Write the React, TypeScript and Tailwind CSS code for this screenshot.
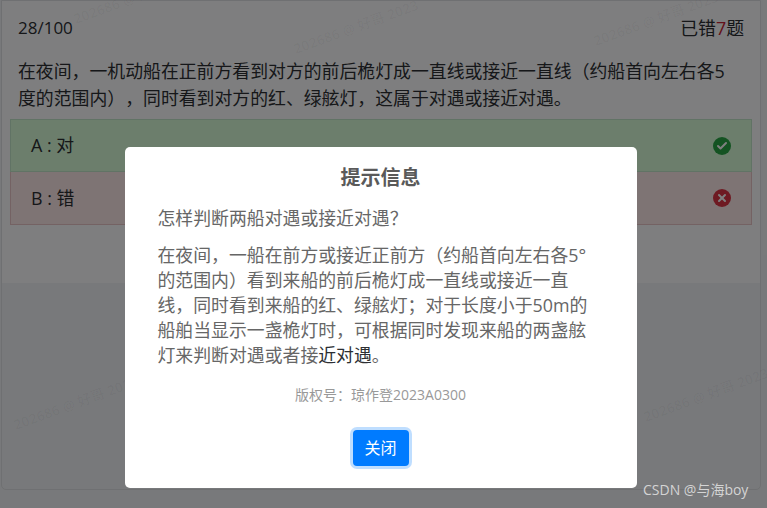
import { Check, X } from "lucide-react";

const FONT = "[font-family:'Open_Sans','Noto_Sans_CJK_SC',sans-serif] [text-spacing-trim:space-all]";

const WATERMARKS = [
  { id: 1, className: "left-[70px] top-[-14px]" },
  { id: 2, className: "left-[290px] top-[16px]" },
  { id: 3, className: "left-[590px] top-[8px]" },
  { id: 4, className: "left-[10px] top-[392px]" },
  { id: 5, className: "left-[640px] top-[384px]" },
];

const App = () => {
  return (
    <div className={`relative h-[508px] w-[767px] overflow-hidden bg-[#f1f3f6] text-[17.87px] text-[#2c2f33] ${FONT}`}>
      {/* Question card */}
      <div className="ml-[1px] flex h-[490px] w-[760px] flex-col rounded-b-[5px] border border-[#dfe1e4]">
        <div className="h-[282px] bg-[#fcfdff]">
          <div className="flex items-center justify-between px-[16px] pt-[14px] leading-[26px]">
            <span className="text-[17px]">28/100</span>
            <span>
              已错<span className="text-[#c82333]">7</span>题
            </span>
          </div>
          <p className="mt-[17px] whitespace-nowrap px-[16px] leading-[27px]">
            在夜间，一机动船在正前方看到对方的前后桅灯成一直线或接近一直线（约船首向左右各5
            <br />
            度的范围内），同时看到对方的红、绿舷灯，这属于对遇或接近对遇。
          </p>
          <div className="mx-[8px] mt-[7px] flex flex-col">
            <div className="flex h-[53px] items-center justify-between border border-[#c3e6cb] bg-[#d8fcd8] pl-[20px] pr-[20px]">
              <span>A : 对</span>
              <span className="flex h-[18px] w-[18px] items-center justify-center rounded-full bg-[#28a745]">
                <Check size={12} strokeWidth={4} color="#ffffff" />
              </span>
            </div>
            <div className="flex h-[53px] items-center justify-between border border-t-0 border-[#e8c4c6] bg-[#fce8e8] pl-[20px] pr-[20px]">
              <span>B : 错</span>
              <span className="flex h-[18px] w-[18px] items-center justify-center rounded-full bg-[#dc3545]">
                <X size={12} strokeWidth={4} color="#ffffff" />
              </span>
            </div>
          </div>
        </div>
      </div>

      {WATERMARKS.map((mark) => (
        <span
          key={mark.id}
          className={`absolute -rotate-[20deg] whitespace-nowrap text-[14px] font-bold text-black/[0.03] ${mark.className}`}
        >
          202686 @ 好哥 2023
        </span>
      ))}

      {/* Backdrop */}
      <div className="absolute inset-0 flex items-start justify-center bg-black/50 pr-[6px] pt-[147px]">
        <div className="flex h-[341px] w-[512px] flex-col items-center rounded-[5px] bg-white px-[33px] pt-[17px] text-[#666666]">
          <h2 className="text-[20px] font-bold leading-[27px] text-[#5a5a5a]">提示信息</h2>
          <p className="mt-[14px] w-full leading-[26px]">怎样判断两船对遇或接近对遇？</p>
          <p className="mt-[12px] w-full whitespace-nowrap leading-[25px]">
            在夜间，一船在前方或接近正前方（约船首向左右各5°
            <br />
            的范围内）看到来船的前后桅灯成一直线或接近一直
            <br />
            线，同时看到来船的红、绿舷灯；对于长度小于50m的
            <br />
            船舶当显示一盏桅灯时，可根据同时发现来船的两盏舷
            <br />
            灯来判断对遇或者接<span className="text-[#2c2f33]">近对遇</span>。
          </p>
          <p className="mt-[17px] text-[14px] leading-[20px] text-[#999999]">版权号：琼作登2023A0300</p>
          <button className="mt-[25px] h-[36px] w-[56px] rounded-[4px] bg-[#007bff] text-[16px] text-white shadow-[0_0_0_3px_rgba(0,123,255,0.25)]">
            关闭
          </button>
        </div>
      </div>

      <span className="absolute left-[643px] top-[481px] text-[14px] leading-[18px] text-[#d4d4d4]">CSDN @与海boy</span>
    </div>
  );
};

export default App;
